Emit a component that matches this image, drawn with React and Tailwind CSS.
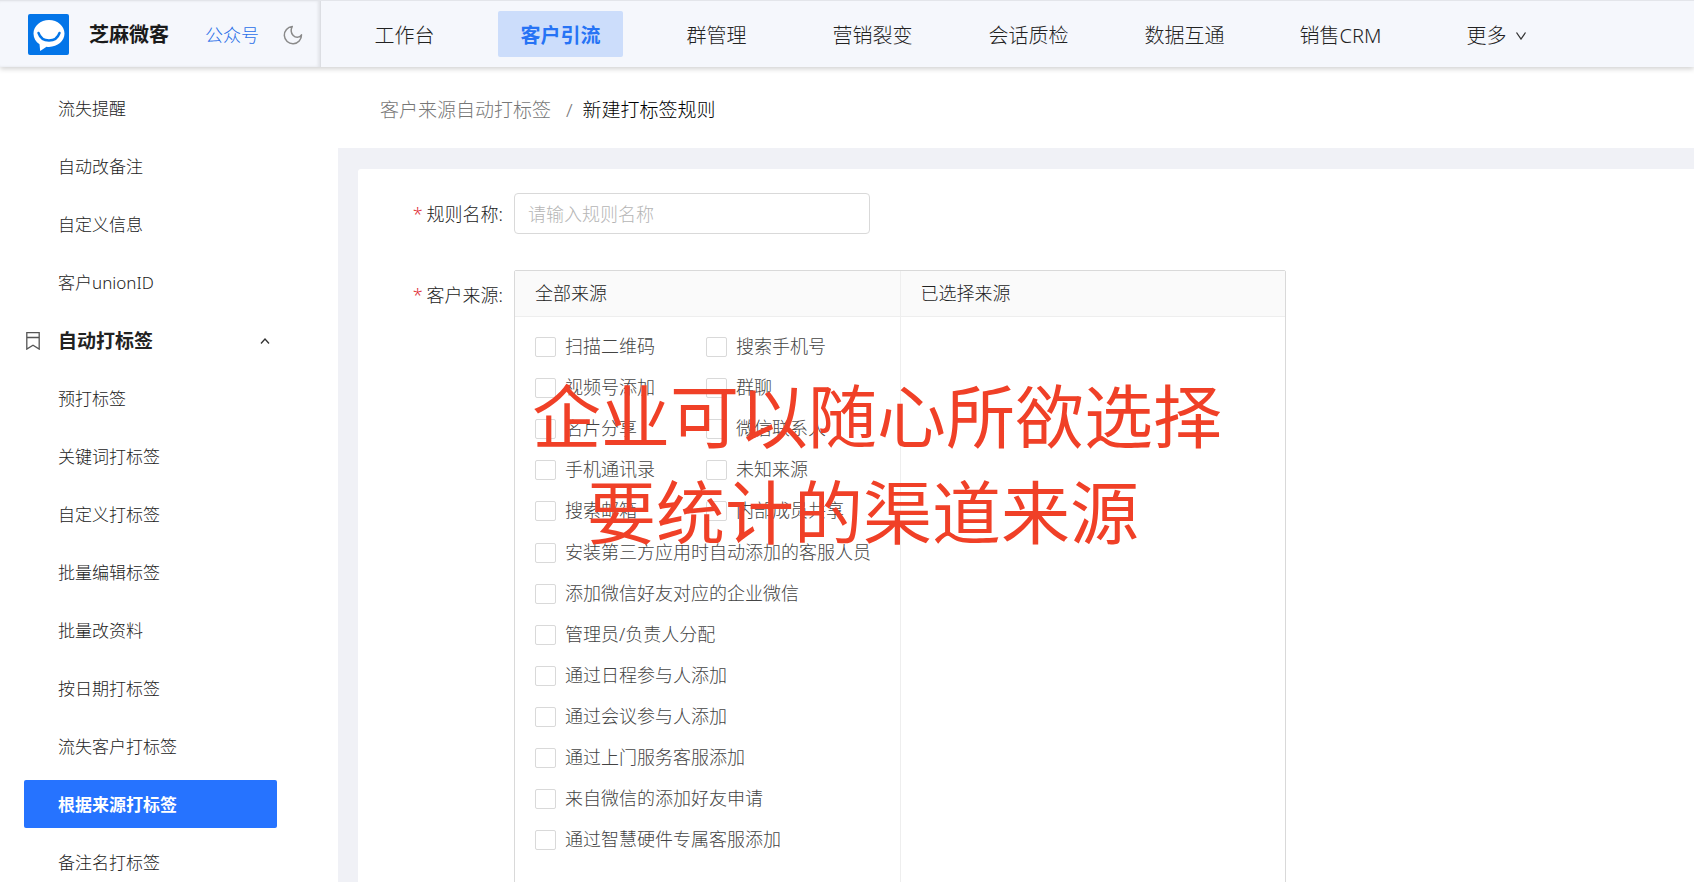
import React, { useState } from 'react';
import clsx from 'clsx';

const navItems = ['工作台', '客户引流', '群管理', '营销裂变', '会话质检', '数据互通', '销售CRM'];

const sideItems = [
  { label: '流失提醒' },
  { label: '自动改备注' },
  { label: '自定义信息' },
  { label: '客户unionID' },
  { label: '自动打标签', group: true },
  { label: '预打标签' },
  { label: '关键词打标签' },
  { label: '自定义打标签' },
  { label: '批量编辑标签' },
  { label: '批量改资料' },
  { label: '按日期打标签' },
  { label: '流失客户打标签' },
  { label: '根据来源打标签', active: true },
  { label: '备注名打标签' }
];

const shortSources = [
  '扫描二维码', '搜索手机号',
  '视频号添加', '群聊',
  '名片分享', '微信联系人',
  '手机通讯录', '未知来源',
  '搜索邮箱', '内部成员共享'
];

const longSources = [
  '安装第三方应用时自动添加的客服人员',
  '添加微信好友对应的企业微信',
  '管理员/负责人分配',
  '通过日程参与人添加',
  '通过会议参与人添加',
  '通过上门服务客服添加',
  '来自微信的添加好友申请',
  '通过智慧硬件专属客服添加'
];

const Logo = () => (
  <svg viewBox="0 0 41 41" className="w-[41px] h-[41px] shrink-0" aria-hidden="true">
    <rect width="41" height="41" rx="2" fill="#0375e8" />
    <path
      d="M21 6C12.500 6 5.500 12.200 5.500 19.500c0 4.600 2.300 8.300 6 10.800L12.200 37l6.300-4.300c.8.100 1.700.2 2.500.2 8.600 0 15.500-6.200 15.500-13.400S29.600 6 21 6Z"
      fill="#fff"
    />
    <path d="M10.500 19c1.700 5 5.600 7.500 10.500 7.500s8.800-2.500 10.500-7.500" fill="none" stroke="#0375e8" strokeWidth="2.400" strokeLinecap="round" />
  </svg>
);

const MoonIcon = () => (
  <svg viewBox="0 0 20 20" className="w-5 h-5" fill="none" stroke="#8a8a8a" strokeWidth="1.500" strokeLinejoin="round" aria-hidden="true">
    <path d="M9.300 1.500A8.600 8.600 0 1 0 18.500 9.800C16.600 13 12.600 13 10.200 10.400 7.900 7.900 7.700 4.400 9.300 1.500Z" />
  </svg>
);

const BookmarkIcon = () => (
  <svg viewBox="0 0 14 18" className="w-[14px] h-[18px]" fill="none" stroke="#555" strokeWidth="1.300" aria-hidden="true">
    <path d="M.8.700h12.400v16.400L7 13.200.8 17.100ZM.8 5.500h12.400" />
  </svg>
);

const Chevron = ({ up }) => (
  <svg viewBox="0 0 12 8" className={clsx('w-3 h-2', up && 'rotate-180')} fill="none" stroke="#333" strokeWidth="1.300" aria-hidden="true">
    {up ? <path d="M2 1.500 6 6 10 1.500" /> : <path d="M1.500 .500 6 7 10.500 .500" />}
  </svg>
);

const SourceOption = ({ label, checked, onChange }) => (
  <label className="flex items-center h-[41px] text-[18px] font-light text-[#444] whitespace-nowrap cursor-pointer">
    <input
      type="checkbox"
      checked={checked}
      onChange={onChange}
      className="appearance-none shrink-0 w-[21px] h-[20px] mr-[9px] rounded-[2px] border border-[#d9d9d9] bg-white checked:bg-[#2673ff]"
    />
    {label}
  </label>
);

const FieldLabel = ({ children, htmlFor, id }) => (
  <label htmlFor={htmlFor} id={id} className="w-[156px] h-[41px] pt-[2px] pr-[11px] shrink-0 flex items-center justify-end text-[18px] font-light text-[#222]">
    <span className="mr-1 text-[#e0333c]">*</span>
    {children}:
  </label>
);

const App = () => {
  const [name, setName] = useState('');
  const [selected, setSelected] = useState([]);

  const toggle = (label) => {
    setSelected((prev) => (prev.includes(label) ? prev.filter((s) => s !== label) : [...prev, label]));
  };

  return (
    <div className="h-screen flex flex-col overflow-hidden bg-white text-[#222] font-['Noto_Sans','Noto_Sans_CJK_SC',sans-serif]">
      <header className="relative z-10 flex h-[67px] shrink-0 border-t border-[#e3e5ea] bg-[#f5f7fc] shadow-[0_2px_5px_rgba(0,0,0,0.18)]">
        <div className="flex items-center w-[321px] shrink-0 pl-7 border-r border-[#dcdee3] shadow-[-2px_0_3px_rgba(0,0,0,0.08)_inset]">
          <Logo />
          <span className="ml-5 pt-[2px] text-[20px] font-bold text-[#1a1a1a]">芝麻微客</span>
          <a href="#account" className="ml-9 pt-[2px] text-[18px] font-light text-[#2a6fe8]">公众号</a>
          <button type="button" aria-label="夜间模式" className="ml-6 pt-[2px]">
            <MoonIcon />
          </button>
        </div>
        <nav className="flex items-center gap-[31px] pl-[21px] text-[20px]">
          {navItems.map((item) => (
            <a
              key={item}
              href="#nav"
              className={clsx(
                'flex items-center justify-center w-[125px] h-[46px] pt-[3px] rounded-[2px] whitespace-nowrap',
                item === '客户引流' ? 'bg-[#ccddfb] font-bold text-[#2673f5]' : 'font-light'
              )}
            >
              {item}
            </a>
          ))}
          <button type="button" className="flex items-center justify-center gap-2 w-[125px] h-[46px] pt-[3px] font-light">
            更多
            <Chevron />
          </button>
        </nav>
      </header>

      <div className="flex flex-1 min-h-0">
        <aside className="w-[338px] shrink-0 overflow-y-auto [scrollbar-width:none] pt-[17px] px-6">
          <ul className="flex flex-col gap-[10px] w-[253px]">
            {sideItems.map((item) => (
              <li key={item.label}>
                {item.group ? (
                  <button type="button" className="flex items-center w-full h-12 pt-[2px] pl-[2px] pr-[6px] text-[19px] font-bold">
                    <BookmarkIcon />
                    <span className="ml-[18px]">{item.label}</span>
                    <span className="ml-auto">
                      <Chevron up />
                    </span>
                  </button>
                ) : (
                  <a
                    href="#menu"
                    className={clsx(
                      'flex items-center h-12 pt-[2px] pl-[34px] rounded-[2px] text-[17px]',
                      item.active ? 'bg-[#2673ff] font-bold text-white' : 'font-light'
                    )}
                  >
                    {item.label}
                  </a>
                )}
              </li>
            ))}
          </ul>
        </aside>

        <main className="flex flex-col flex-1 min-w-0">
          <div className="flex items-center h-[81px] shrink-0 pt-[6px] pl-[42px] text-[19px] font-light">
            <a href="#rules" className="text-[#777]">客户来源自动打标签</a>
            <span className="ml-[15px] mr-[10px] text-[#777]">/</span>
            <span className="text-black">新建打标签规则</span>
          </div>

          <div className="flex-1 min-h-0 overflow-y-auto [scrollbar-width:none] bg-[#f0f1f6] pt-[21px] pl-5">
            <form className="min-h-full rounded-tl-[3px] bg-white pt-6 pb-10">
              <div className="flex">
                <FieldLabel htmlFor="rule-name">规则名称</FieldLabel>
                <input
                  id="rule-name"
                  type="text"
                  value={name}
                  onChange={(e) => setName(e.target.value)}
                  placeholder="请输入规则名称"
                  className="w-[356px] h-[41px] px-[13px] rounded-[4px] border border-[#d9d9d9] text-[18px] font-light placeholder:text-[#b5b5b5] outline-none"
                />
              </div>

              <div className="flex mt-9 pr-5">
                <div className="pt-1">
                  <FieldLabel id="source-label">客户来源</FieldLabel>
                </div>
                <div role="group" aria-labelledby="source-label" className="relative flex w-full max-w-[772px] rounded-[2px] border border-[#d9d9d9]">
                  <div className="flex-1 border-r border-[#eee]">
                    <h2 className="h-[46px] pl-5 flex items-center border-b border-[#eee] bg-[#fafafa] text-[18px] font-light">全部来源</h2>
                    <div className="flex flex-col gap-px pt-[9px] pl-5 pb-10">
                      <div className="grid grid-cols-[171px_1fr]">
                        {shortSources.map((label) => (
                          <SourceOption key={label} label={label} checked={selected.includes(label)} onChange={() => toggle(label)} />
                        ))}
                      </div>
                      <div>
                        {longSources.map((label) => (
                          <SourceOption key={label} label={label} checked={selected.includes(label)} onChange={() => toggle(label)} />
                        ))}
                      </div>
                    </div>
                  </div>
                  <div className="flex-1">
                    <h2 className="h-[46px] pl-5 flex items-center border-b border-[#eee] bg-[#fafafa] text-[18px] font-light">已选择来源</h2>
                    <ul className="pt-[9px] pl-5">
                      {selected.map((label) => (
                        <li key={label} className="flex items-center h-[41px] text-[18px] font-light text-[#444]">{label}</li>
                      ))}
                    </ul>
                  </div>

                  {/* caption over both columns */}
                  <p className="absolute top-[97px] left-[17px] text-[69px] leading-[96px] text-[#f04027] whitespace-nowrap pointer-events-none">
                    企业可以随心所欲选择
                    <span className="block pl-[55px]">要统计的渠道来源</span>
                  </p>
                </div>
              </div>
            </form>
          </div>
        </main>
      </div>
    </div>
  );
};

export default App;
